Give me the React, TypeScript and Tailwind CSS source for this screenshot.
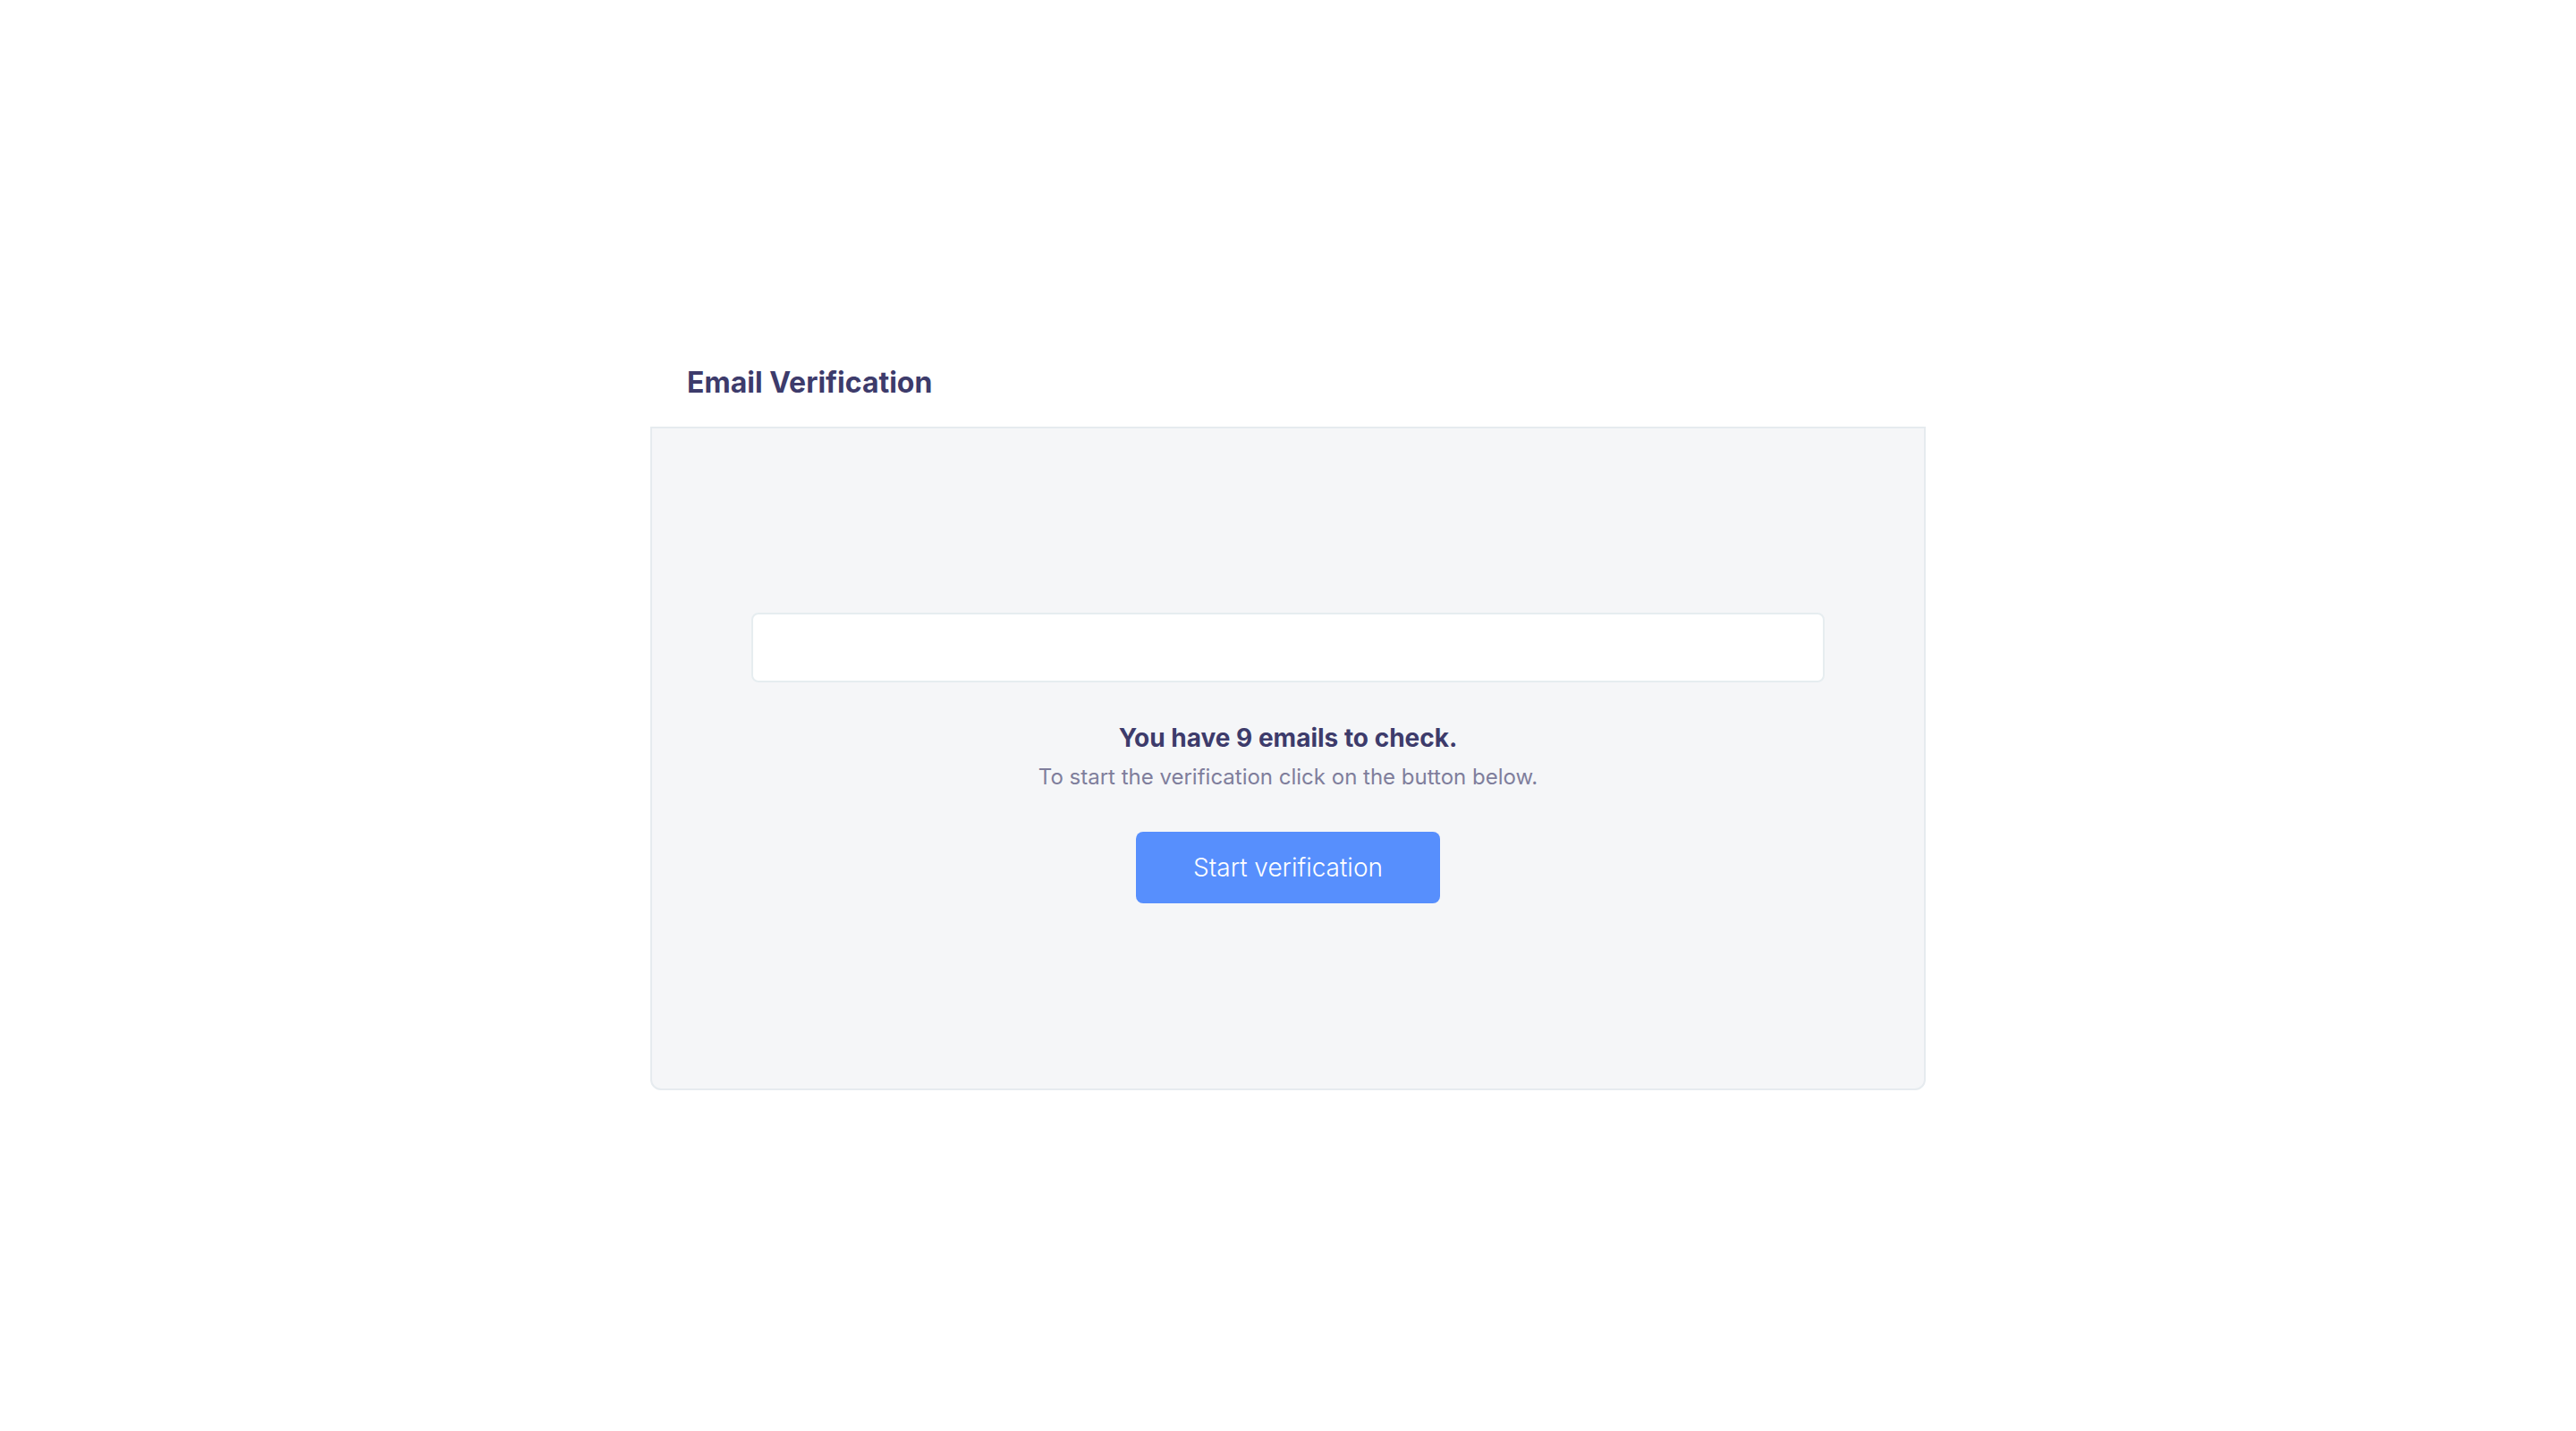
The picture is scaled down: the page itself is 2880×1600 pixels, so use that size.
import React from 'react';

export default function App() {
  return (
    <div className="flex min-h-screen items-center justify-center bg-white pt-[27px] font-['Inter',sans-serif]">
      <div className="w-[1426px]">
        {/* Header */}
        <h1 className="mb-[30px] px-[41px] text-[32px] font-bold leading-[38px] text-[#3d3b6b]">
          Email Verification
        </h1>

        {/* Panel */}
        <div className="flex h-[742px] flex-col items-center justify-center rounded-b-xl border-2 border-[#e6ebef] bg-[#f5f6f8] px-[111px]">
          <div className="h-[78px] w-full rounded-lg border-2 border-[#e6edf0] bg-white" />

          <p className="mt-[45px] text-[28px] font-bold leading-[35px] text-[#3d3b6b]">
            You have 9 emails to check.
          </p>
          <p className="mt-[11px] text-[24px] leading-[29px] text-[#7f7e9c]">
            To start the verification click on the button below.
          </p>

          <button className="mt-[47px] h-[80px] w-[340px] rounded-lg bg-[#578ffd] text-[28px] font-light text-white">
            Start verification
          </button>
        </div>
      </div>
    </div>
  );
}
